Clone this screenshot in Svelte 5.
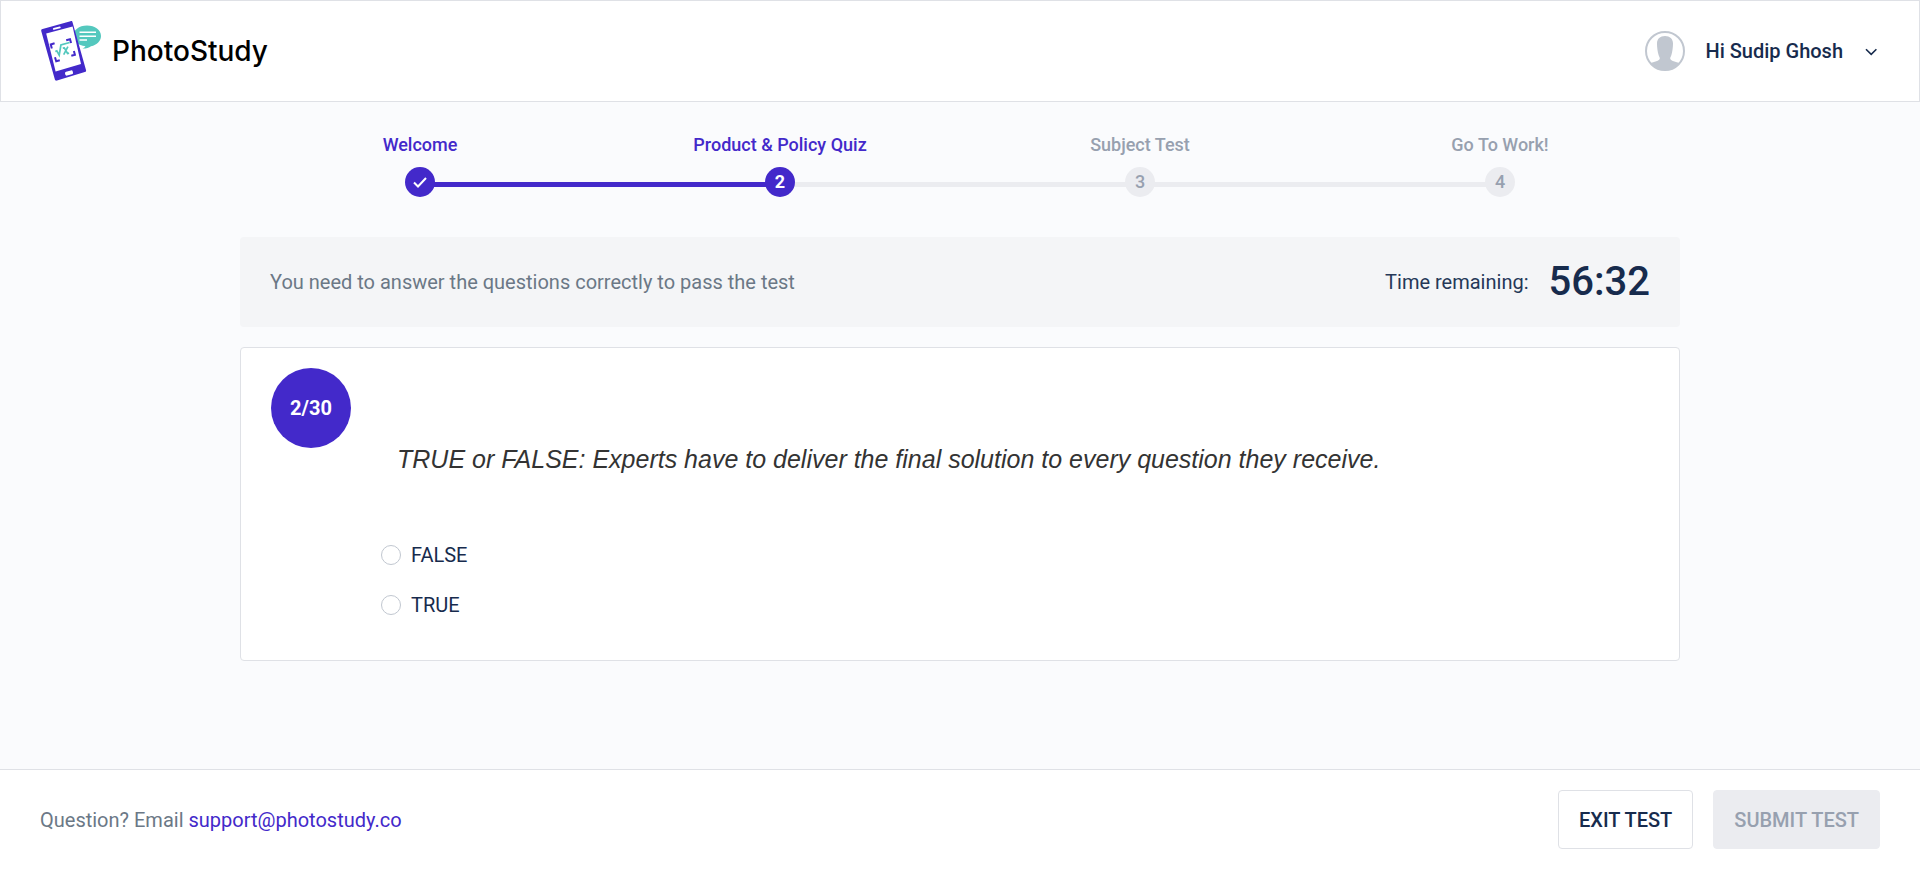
<script>
    let user = 'Sudip Ghosh'
    let timeRemaining = '56:32'
    let currentStep = 2
    let questionNumber = 2
    let questionCount = 30
    let answer = ''

    const steps = ['Welcome', 'Product & Policy Quiz', 'Subject Test', 'Go To Work!']
    const options = ['FALSE', 'TRUE']
</script>

<div class="page">
    <header class="header">
        <a class="brand" href="#home">
            <svg class="logo" width="62" height="62" viewBox="0 0 62 62" aria-hidden="true">
                <path d="M46 5.500c8 0 14 4.500 14 10.500 0 5-4 9-10 10.300-2 1.500-5 2.400-8.500 2.300 1.500-.7 2.600-1.800 3-2.400C37 25.500 32 21.500 32 16S38 5.500 46 5.500z" fill="#54c8be"/>
                <path d="M38.500 12.200H55M38.500 16.200H55M38.500 20H46" stroke="#fff" stroke-width="1.400"/>
                <path d="M1.600 9.100 29.500 1.200c1.200-.3 1.800.1 2.100 1.300L45 50c.3 1.300 0 1.800-1.200 2.100L16 60.600c-1.200.3-1.800 0-2.200-1.300L.3 11.300C0 10 .3 9.400 1.600 9.100z" fill="#4329ca"/>
                <path d="M5.200 13.500 31.600 6.400 40 44 14.600 51.500z" fill="#fff"/>
                <path d="M12.800 8.900l6-1.600" stroke="#fff" stroke-width="1.800" stroke-linecap="round"/>
                <rect x="24" y="51" width="8" height="4" rx="1.500" transform="rotate(-15 28 53)" fill="#fff"/>
                <path d="M10.800 28.500l-1-4 3.800-1.200M25.200 20.200l3.800-1 1.100 3.800M14 37.300l1.200 3.900 3.600-1M30.300 35.800l3.600-1-1-3.800" fill="none" stroke="#4329ca" stroke-width="2"/>
                <path d="M14.300 31.600l1.500-.7 2.400 4.300 1.700-10.200 8.800-2.500M21.800 28.200l1.500-.3 3.300 5.600 1.500-.3M26.900 26.700l-4.200 7.900" fill="none" stroke="#54c8be" stroke-width="1.700"/>
            </svg>
            <span>PhotoStudy</span>
        </a>
        <button class="user" type="button">
            <svg width="40" height="40" viewBox="0 0 40 40" aria-hidden="true">
                <circle cx="20" cy="20" r="19" fill="#fff" stroke="#c1c7d0" stroke-width="2"/>
                <path d="M20 5c5 0 8.200 3 8 8 0 3-.6 8-1.600 11-.6 1.800-1.200 2.500-1.200 3.500 0 2.500 6 3.300 9.800 4.700A19 19 0 0 1 5 32.200c3.800-1.400 9.800-2.200 9.800-4.700 0-1-.6-1.700-1.200-3.500C12.600 21 12 16 12 13c-.2-5 3-8 8-8z" fill="#c1c7d0"/>
            </svg>
            <span>Hi {user}</span>
            <svg class="chevron" width="16" height="8" viewBox="0 0 16 8" aria-hidden="true">
                <path d="M3 1.200l5.200 5.200 5.200-5.200" fill="none" stroke="#172b4d" stroke-width="1.600"/>
            </svg>
        </button>
    </header>

    <main class="content">
        <ol class="steps">
            {#each steps as step, i}
                <li class="step" class:active={i < currentStep} class:passed={i + 1 < currentStep}>
                    <span class="step-label">{step}</span>
                    <span class="step-dot">
                        {#if i + 1 < currentStep}
                            <svg width="16" height="14" viewBox="0 0 16 14" aria-label="done">
                                <path d="M2 7.500l4 4L14 3" fill="none" stroke="#fff" stroke-width="2"/>
                            </svg>
                        {:else}
                            {i + 1}
                        {/if}
                    </span>
                </li>
            {/each}
        </ol>

        <section class="info">
            <p>You need to answer the questions correctly to pass the test</p>
            <div class="timer">
                <span>Time remaining:</span>
                <strong>{timeRemaining}</strong>
            </div>
        </section>

        <section class="card">
            <div class="counter">{questionNumber}/{questionCount}</div>
            <form class="question">
                <h1>TRUE or FALSE: Experts have to deliver the final solution to every question they receive.</h1>
                <div class="options">
                    {#each options as option}
                        <label class="option">
                            <input type="radio" name="answer" value={option} bind:group={answer} />
                            {option}
                        </label>
                    {/each}
                </div>
            </form>
        </section>
    </main>

    <footer class="footer">
        <p>Question? Email <a href="mailto:support@photostudy.co">support@photostudy.co</a></p>
        <div class="actions">
            <button class="btn" type="button">EXIT TEST</button>
            <button class="btn submit" type="button" disabled={!answer}>SUBMIT TEST</button>
        </div>
    </footer>
</div>

<style>
:global(body) {
    background-color: #fafbfd;
}

.page {
    display: flex;
    flex-direction: column;
    min-height: 100vh;
    font-family: Roboto, "Liberation Sans", sans-serif;
    font-size: 20px;
    line-height: 30px;
    color: #172b4d;
}

p, h1, ol {
    margin: 0;
    padding: 0;
}

button {
    font: inherit;
    color: inherit;
    cursor: pointer;
}

.header {
    display: flex;
    align-items: center;
    justify-content: space-between;
    padding: 19px 40px;
    background-color: #fff;
    border: 1px solid #dfe1e6;
}

.brand {
    display: flex;
    align-items: center;
    gap: 9px;
    font-family: Inter, sans-serif;
    font-size: 28px;
    font-weight: 500;
    color: #000;
    text-decoration: none;
}

.logo {
    display: block;
}

.user {
    display: flex;
    align-items: center;
    gap: 20px;
    padding: 0;
    border: none;
    background: none;
    font-weight: 500;
}

.chevron {
    margin-top: 2px;
}

.content {
    flex: 1;
    box-sizing: border-box;
    width: 75%;
    margin: 0 auto;
}

.steps {
    display: grid;
    grid-template-columns: repeat(4, 1fr);
    padding: 28px 0 40px;
    list-style: none;
    font-size: 18px;
    font-weight: 500;
    color: #97a0af;
}

.step {
    position: relative;
    display: flex;
    flex-direction: column;
    align-items: center;
    gap: 7px;
}

.step.active {
    color: #4329ca;
}

/* line that joins a dot to the next one */
.step:not(:last-child)::after {
    content: "";
    position: absolute;
    left: 50%;
    bottom: 10px;
    width: 100%;
    height: 5px;
    background-color: #ebecf0;
}

.step.passed:not(:last-child)::after {
    background-color: #4329ca;
}

.step-dot {
    z-index: 1;
    display: flex;
    align-items: center;
    justify-content: center;
    width: 30px;
    height: 30px;
    border-radius: 50%;
    background-color: #ebecf0;
}

.active .step-dot {
    background-color: #4329ca;
    color: #fff;
    font-weight: 700;
}

.info {
    display: flex;
    align-items: center;
    justify-content: space-between;
    padding: 20px 30px;
    border-radius: 4px;
    background-color: #f4f5f7;
    color: #6b7886;
}

.timer {
    display: flex;
    align-items: center;
    gap: 20px;
    color: #253858;
}

.timer strong {
    font-size: 40px;
    line-height: 50px;
    font-weight: 500;
    color: #172b4d;
}

.card {
    display: flex;
    gap: 30px;
    margin: 20px 0;
    padding: 20px 30px 30px;
    border: 1px solid #dfe1e6;
    border-radius: 4px;
    background-color: #fff;
}

.counter {
    display: flex;
    align-items: center;
    justify-content: center;
    flex-shrink: 0;
    width: 80px;
    height: 80px;
    border-radius: 50%;
    background-color: #4329ca;
    color: #fff;
    font-weight: 700;
}

.question {
    flex: 1;
    padding-top: 76px;
}

.question h1 {
    padding-left: 16px;
    font-family: "Liberation Sans", Arial, sans-serif;
    font-size: 25px;
    font-weight: 400;
    font-style: italic;
    color: #333;
}

.options {
    margin-top: 56px;
}

.option {
    display: flex;
    align-items: center;
    gap: 10px;
    height: 50px;
}

.option input {
    appearance: none;
    width: 20px;
    height: 20px;
    margin: 0;
    border: 1px solid #c1c7d0;
    border-radius: 50%;
    background-color: #fff;
}

.option input:checked {
    border: 6px solid #4329ca;
}

.footer {
    display: flex;
    align-items: center;
    justify-content: space-between;
    padding: 20px 40px;
    background-color: #fff;
    border-top: 1px solid #dfe1e6;
    color: #6b7886;
}

.footer a {
    color: #4329ca;
    text-decoration: none;
}

.actions {
    display: flex;
    gap: 20px;
}

.btn {
    height: 59px;
    padding: 0 20px;
    border: 1px solid #dfe1e6;
    border-radius: 4px;
    background-color: #fff;
    color: #172b4d;
    font-weight: 500;
}

.submit:disabled {
    border-color: #ebecf0;
    background-color: #ebecf0;
    color: #97a0af;
    cursor: default;
}
</style>
